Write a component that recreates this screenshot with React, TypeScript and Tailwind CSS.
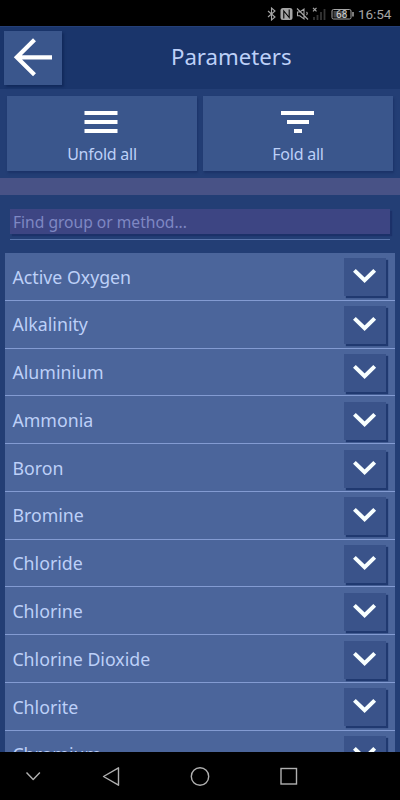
import React from "react";

const groups = [
  "Active Oxygen",
  "Alkalinity",
  "Aluminium",
  "Ammonia",
  "Boron",
  "Bromine",
  "Chloride",
  "Chlorine",
  "Chlorine Dioxide",
  "Chlorite",
  "Chromium",
];

function StatusBar() {
  return (
    <div className="flex h-[26px] shrink-0 items-center justify-end bg-black pr-[8px] pt-[2px] text-[#a5a5a5]">
      <svg width="88" height="14" viewBox="0 0 88 14" fill="none" stroke="currentColor">
        <path d="M1 4l7 6-3.500 3V1L8 4 1 10" strokeWidth="1.100" />
        <rect x="13.500" y="1" width="12" height="12" rx="2.500" fill="currentColor" stroke="none" />
        <path d="M16.800 11.500V4l5.400 6.500V2.500" stroke="#000" strokeWidth="1.100" />
        <path d="M30.500 5h2.300L37 2v10l-4.200-3.200h-2.300zM30 1.500l11 11M39.500 5q1.500 1.500 0 3" strokeWidth="1.100" />
        <path d="M46 .800l3.500 3.500M49.500 .800L46 4.300" strokeWidth="1.200" />
        <path d="M47 10v3M50.500 8v5M54 5v8M57.500 2v11" stroke="#363636" strokeWidth="1.800" />
        <rect x="65" y="2.500" width="19" height="9.500" rx="1.500" />
        <rect x="66.500" y="4" width="12" height="6.500" fill="#444" stroke="none" />
        <path d="M86 5v4.500" strokeWidth="1.500" />
        <text x="74.700" y="10.900" textAnchor="middle" fill="#d0d0d0" stroke="none" className="font-['Roboto',sans-serif] text-[10px]">68</text>
      </svg>
      <span className="ml-[3px] w-[34px] whitespace-nowrap pt-px font-['Roboto',sans-serif] text-[13.600px] leading-none tracking-[-0.1px]">16:54</span>
    </div>
  );
}

function Chevron() {
  return (
    <svg width="24" height="16" viewBox="0 0 24 16" fill="none" stroke="#f8ffff" strokeWidth="4">
      <path d="M1.400 2.400L11.600 12.300l10.100-9.900" />
    </svg>
  );
}

export default function App() {
  return (
    <div className="flex h-[800px] w-[400px] flex-col overflow-hidden bg-[#233e75] font-['Noto_Sans',sans-serif] text-[#bdd0f8]">
      <StatusBar />
      <header className="flex h-[63px] shrink-0 items-center border-t border-[#243f77] bg-[#1a356b] pl-1">
        <button className="flex h-[54px] w-[58px] items-center justify-center bg-[#3a568c] shadow-[2px_2px_2px_#122a5c]">
          <svg width="40" height="40" viewBox="0 0 40 40" fill="none" stroke="#fff" strokeWidth="4.200">
            <path d="M39 19.300H3.500M21.500 1.800L3.800 19.300l17.700 17.500" />
          </svg>
        </button>
        <h1 className="ml-[109px] -mt-[2px] text-[22.200px] leading-none">Parameters</h1>
      </header>
      <div className="flex h-[89px] shrink-0 gap-[6px] px-[7px] pt-[7px]">
        <button className="flex h-[75px] w-[190px] flex-col items-center bg-[#3a568c] pt-[15px] text-base tracking-[-0.25px] shadow-[1px_2px_2px_#1b3368]">
          <svg className="mr-[2px]" width="34" height="24" viewBox="0 0 34 24" fill="#fff">
            <path d="M.5 0h33v4H.5zM.5 9h33v4H.5zM.5 18h33v4H.5z" />
          </svg>
          <span className="mt-[8px] leading-[22px]">Unfold all</span>
        </button>
        <button className="flex h-[75px] w-[190px] flex-col items-center bg-[#3a568c] pt-[15px] text-base tracking-[-0.25px] shadow-[1px_2px_2px_#1b3368]">
          <svg width="34" height="24" viewBox="0 0 34 24" fill="#fff">
            <path d="M0 0h33v4H0zM6 9h22v4H6zM13 18h8v4h-8z" />
          </svg>
          <span className="mt-[8px] leading-[22px]">Fold all</span>
        </button>
      </div>
      <div className="h-[17px] shrink-0 bg-[#485286]" />
      <div className="mx-[10px] mt-[14px] h-[31px] shrink-0 border-b border-[#5974ac]">
        <input
          className="block h-[25px] w-full bg-[#3d4583] pl-[3px] text-[15.600px] text-[#8993cc] shadow-[2px_2px_1px_#1c3169] outline-none placeholder:text-[#7f88c3]"
          placeholder="Find group or method..."
        />
      </div>
      <main className="mt-[13px] min-h-0 flex-1 overflow-hidden pl-[5.400px] pr-[5px]">
        <ul>
          {groups.map((g) => (
            <li key={g} className="flex h-[47.790px] items-center justify-between border-b border-[#839bd2] bg-[#4b659b] pl-[7px] pr-[9px] text-[17.750px]">
              <span className="pt-[1px]">{g}</span>
              <button className="mt-[2px] flex h-[38px] w-[42px] items-center justify-center bg-[#3a538a] pb-[2px] shadow-[2px_2px_1px_#203970]">
                <Chevron />
              </button>
            </li>
          ))}
        </ul>
      </main>
      <nav className="flex h-[48px] shrink-0 items-center bg-black">
        <svg width="400" height="48" viewBox="0 0 400 48" fill="none" stroke="#b0b0b0" strokeWidth="1.400">
          <path d="M26.500 20.500l6.700 7 6.700-7M118.500 15.800v17.400L103.500 24.500z" strokeLinejoin="round" />
          <circle cx="200" cy="24.500" r="8.700" />
          <rect x="281" y="16.500" width="15.500" height="15.500" />
        </svg>
      </nav>
    </div>
  );
}
